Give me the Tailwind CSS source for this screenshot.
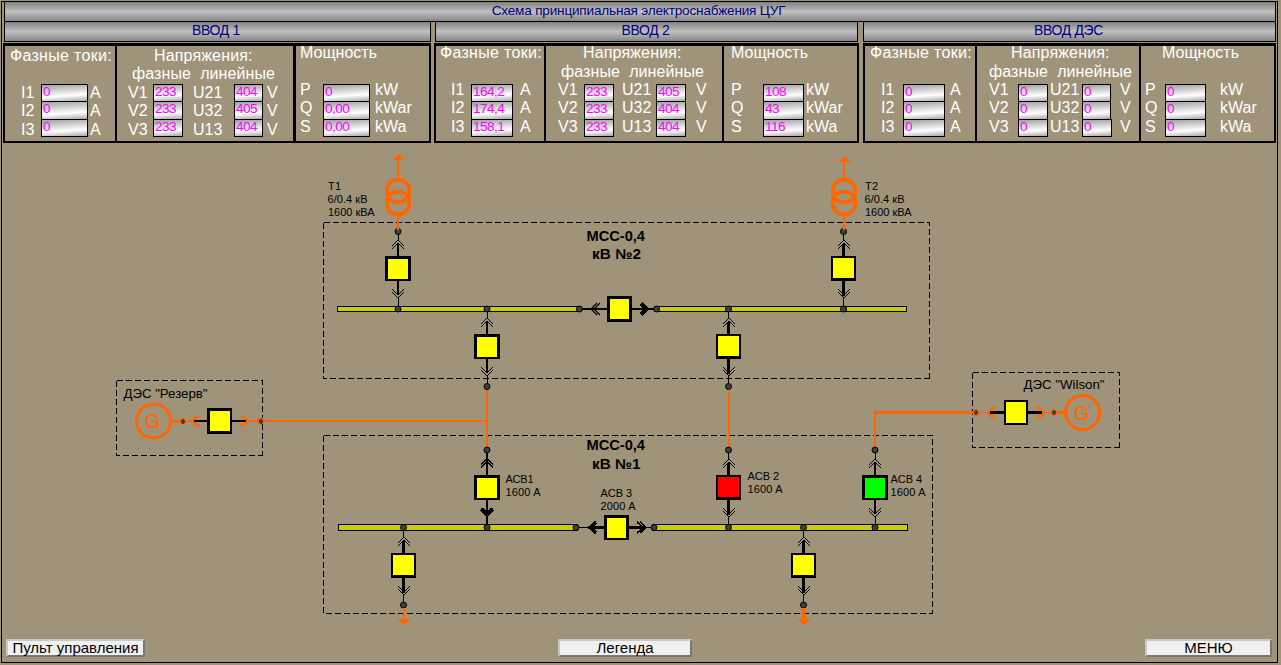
<!DOCTYPE html>
<html lang="ru">
<head>
<meta charset="utf-8">
<title>Схема принципиальная электроснабжения ЦУГ</title>
<script src="https://cdn.jsdelivr.net/npm/@tailwindcss/browser@4"></script>
</head>
<body class="h-[665px] w-[1281px] overflow-hidden bg-[#9f9479] font-['Liberation_Sans',Arial,sans-serif]">
<div class="ml-px mt-px flex h-[662px] w-[1277px] flex-col border border-black pl-[2px]">
  <!-- Title -->
  <header class="-mt-px h-[21px] w-[1272px] border border-black bg-linear-to-b from-[#808080] via-[#c0c0c0] to-[#888888] pr-[3px] text-center text-[13.6px] leading-[17px] tracking-[-0.2px] whitespace-nowrap text-[#000080]">Схема принципиальная электроснабжения ЦУГ</header>
  <!-- Feeder headings -->
  <div class="-mt-px flex text-center text-[14px] leading-[17px] tracking-[-0.35px] text-[#000080]">
    <div class="h-[21px] w-[427px] border border-black bg-linear-to-b from-[#808080] via-[#c0c0c0] to-[#888888] pr-[3px]">ВВОД 1</div>
    <div class="ml-[4px] h-[21px] w-[423px] border border-black bg-linear-to-b from-[#808080] via-[#c0c0c0] to-[#888888] pr-[2px]">ВВОД 2</div>
    <div class="ml-[5px] h-[21px] w-[413px] border border-black bg-linear-to-b from-[#808080] via-[#c0c0c0] to-[#888888] pr-[2px]">ВВОД ДЭС</div>
  </div>
  <!-- Measurements -->
  <main class="-ml-px mt-px flex text-[16px] leading-[18.4px] whitespace-nowrap text-white [&_.v]:flex [&_.v]:flex-col [&_.v]:text-[13.6px] [&_.v]:leading-[14px] [&_.v]:tracking-[-0.55px] [&_.v]:text-[#ff00ff] [&_.v>div]:h-[18px] [&_.v>div]:border [&_.v>div]:border-black [&_.v>div]:bg-linear-[176deg] [&_.v>div]:from-[#a0a0a0] [&_.v>div]:via-[#ffffff] [&_.v>div]:via-65% [&_.v>div]:to-[#a8a8a8] [&_.v>div]:pl-px [&_.v>div+div]:-mt-px [&_.v>div:nth-child(2)]:h-[19px]">
    <section class="flex h-[100px] w-[428px] border-2 border-t-3 border-black">
      <div class="w-[112px] border-r-2 border-black">
        <div class="h-[38px] pt-px pl-[5px] tracking-[0.3px]">Фазные токи:</div>
        <div class="grid grid-cols-[20px_47px_1fr] pl-[16px]">
          <div>I1<br>I2<br>I3</div>
          <div class="v"><div>0</div><div>0</div><div>0</div></div>
          <div class="pl-[2px]">A<br>A<br>A</div>
        </div>
      </div>
      <div class="w-[179px] border-r-3 border-black">
        <div class="h-[38px] pt-px"><div class="pl-[37px] tracking-[0.15px]">Напряжения:</div><div class="pl-[15px] tracking-[0.1px]">фазные&nbsp; линейные</div></div>
        <div class="grid grid-cols-[25px_30px_51px_29px_1fr] pl-[11px]">
          <div>V1<br>V2<br>V3</div>
          <div class="v"><div>233</div><div>233</div><div>233</div></div>
          <div class="pl-[10px]">U21<br>U32<br>U13</div>
          <div class="v"><div>404</div><div>405</div><div>404</div></div>
          <div class="pl-[4px]">V<br>V<br>V</div>
        </div>
      </div>
      <div class="flex-1">
        <div class="-mt-[2px] h-[40px] pl-[4px]">Мощность</div>
        <div class="grid grid-cols-[24px_47px_1fr] pl-[3px]">
          <div class="-mt-[3px] pl-px">P<br>Q<br>S</div>
          <div class="v"><div>0</div><div>0,00</div><div>0,00</div></div>
          <div class="-mt-[3px] pl-[5px]">kW<br>kWar<br>kWa</div>
        </div>
      </div>
    </section>
    <section class="ml-[3px] flex h-[100px] w-[425px] border-2 border-t-3 border-black [&_.v>div]:pl-[2px]">
      <div class="w-[110px] border-r-2 border-black">
        <div class="-mt-[2px] h-[40px] pl-[4px] tracking-[0.3px]">Фазные токи:</div>
        <div class="grid grid-cols-[20px_42px_1fr] pl-[15px]">
          <div class="-mt-[3px]">I1<br>I2<br>I3</div>
          <div class="v"><div>164,2</div><div>174,4</div><div>158,1</div></div>
          <div class="-mt-[3px] pl-[7px]">A<br>A<br>A</div>
        </div>
      </div>
      <div class="w-[178px] border-r-2 border-black">
        <div class="-mt-[2px] h-[40px]"><div class="pl-[37px] tracking-[0.15px]">Напряжения:</div><div class="pt-px pl-[15px] tracking-[0.1px]">фазные&nbsp; линейные</div></div>
        <div class="grid grid-cols-[26px_30px_42px_30px_1fr] pl-[12px]">
          <div class="-mt-[3px]">V1<br>V2<br>V3</div>
          <div class="v"><div>233</div><div>233</div><div>233</div></div>
          <div class="-mt-[3px] pl-[8px]">U21<br>U32<br>U13</div>
          <div class="v"><div>405</div><div>404</div><div>404</div></div>
          <div class="-mt-[3px] pl-[10px]">V<br>V<br>V</div>
        </div>
      </div>
      <div class="flex-1">
        <div class="-mt-[2px] h-[40px] pl-[7px]">Мощность</div>
        <div class="grid grid-cols-[33px_41px_1fr] pl-[6px]">
          <div class="-mt-[3px] pl-px">P<br>Q<br>S</div>
          <div class="v"><div>108</div><div>43</div><div>116</div></div>
          <div class="-mt-[3px] pl-[2px]">kW<br>kWar<br>kWa</div>
        </div>
      </div>
    </section>
    <section class="ml-[4px] flex h-[100px] w-[413px] border-2 border-t-3 border-black [&_.v>div]:pl-[2px]">
      <div class="w-[112px] border-r-2 border-black">
        <div class="-mt-[2px] h-[40px] pl-[5px] tracking-[0.3px]">Фазные токи:</div>
        <div class="grid grid-cols-[22px_42px_1fr] pl-[16px]">
          <div class="-mt-[3px]">I1<br>I2<br>I3</div>
          <div class="v"><div>0</div><div>0</div><div>0</div></div>
          <div class="-mt-[3px] pl-[5px]">A<br>A<br>A</div>
        </div>
      </div>
      <div class="w-[164px] border-r-2 border-black">
        <div class="-mt-[2px] h-[40px]"><div class="pl-[34px] tracking-[0.15px]">Напряжения:</div><div class="pt-px pl-[12px] tracking-[0.1px]">фазные&nbsp; линейные</div></div>
        <div class="grid grid-cols-[29px_30px_34px_29px_1fr] pl-[12px]">
          <div class="-mt-[3px]">V1<br>V2<br>V3</div>
          <div class="v"><div>0</div><div>0</div><div>0</div></div>
          <div class="-mt-[3px] pl-[2px]">U21<br>U32<br>U13</div>
          <div class="v"><div>0</div><div>0</div><div class="-mr-px">0</div></div>
          <div class="-mt-[3px] pl-[9px]">V<br>V<br>V</div>
        </div>
      </div>
      <div class="flex-1">
        <div class="-mt-[2px] h-[40px] pl-[21px]">Мощность</div>
        <div class="grid grid-cols-[21px_41px_1fr] pl-[3px]">
          <div class="-mt-[3px] pl-px">P<br>Q<br>S</div>
          <div class="v"><div>0</div><div>0</div><div>0</div></div>
          <div class="-mt-[3px] pl-[14px]">kW<br>kWar<br>kWa</div>
        </div>
      </div>
    </section>
  </main>
  <!-- Single-line diagram -->
  <svg class="-ml-[4px] h-[496px] w-[1281px] shrink-0" viewBox="0 143 1281 496" shape-rendering="crispEdges" fill="none">
    <defs>
      <g id="chev"><path d="M-6 -22.5L0 -28.5L6 -22.5M-6 -19.5L0 -25.5L6 -19.5M-6 20.5L0 26.5L6 20.5M-6 23.5L0 29.5L6 23.5" stroke="#000"/></g>
      <g id="b3"><use href="#chev"/><path d="M.5 -37V-28M.5 29V38" stroke="#000"/><path d="M0 -25V25" stroke="#000" stroke-width="2"/><path d="M-13 -12.5h26v25h-26z" fill="#000"/><path d="M-10 -9.5h20v20h-20z" fill="currentColor"/></g>
      <g id="b2"><use href="#chev" x="0.5"/><path d="M0 -37V-28M0 29V38" stroke="#000"/><path d="M0 -25V27" stroke="#000" stroke-width="3"/><path d="M-12.5 -12.5h25v25h-25z" fill="#000"/><path d="M-10.5 -10.5h21v20h-21z" fill="currentColor"/></g>
      <circle id="n" r="3" fill="#404040" stroke="#000" shape-rendering="geometricPrecision"/>
      <g id="on"><circle r="3.5" fill="#ff6600" shape-rendering="geometricPrecision"/><path d="M-2 -1.5h1v-1h2v1h1v3h-1v1h-2v-1h-1z" fill="#404040"/></g>
      <g id="tr" stroke="#ff6600"><circle cy="191" r="11.5" stroke-width="4"/><circle cy="203" r="11.5" stroke-width="4"/><path d="M0 216V230" stroke-width="2"/></g>
    </defs>

    <g stroke="#000" stroke-dasharray="6 3">
      <path d="M323.5 222.5H929.5V378.5M323.5 222.5V378.5H929.5"/>
      <path d="M323.5 435.5H932.5V613.5M323.5 435.5V613.5H932.5"/>
      <path d="M116.5 380.5H262.5V455.5M116.5 380.5V455.5H262.5"/>
      <path d="M972.5 372.5H1119.5V447.5M972.5 372.5V447.5H1119.5"/>
    </g>

    <g fill="#cccc00" stroke="#000">
      <path d="M337.5 306.5H580.5V311.5H337.5zM655.5 306.5H906.5V311.5H655.5z"/>
      <path d="M338.5 524.5H577.5V530.5H338.5zM652.5 524.5H907.5V530.5H652.5z"/>
    </g>

    <g stroke="#ff6600" stroke-width="2">
      <path d="M487 389V448M263 421H487M729 391V448M875 448V412"/>
      <path d="M874 412.5H974" stroke-width="3"/>
    </g>

    <g color="#ffff00">
      <use href="#b3" x="398" y="268.5"/>
      <use href="#b2" x="843.5" y="268.5"/>
      <use href="#b3" x="487" y="346.5"/>
      <use href="#b2" x="728.5" y="346.5"/>
      <use href="#b3" x="487" y="487.5"/>
      <use href="#b2" x="728.5" y="487.5" color="#ff0000"/>
      <use href="#b3" x="875" y="487.5" color="#00ff00"/>
      <use href="#b2" x="403.5" y="565.5"/>
      <use href="#b2" x="803.5" y="565.5"/>
    </g>
    <path d="M487 453V475M487 500V525" stroke="#000" stroke-width="2"/>
    <path d="M481.5 509L487 514.5L492.5 509" stroke="#000" stroke-width="4"/>
    <path d="M481 464.5L487 458.5L493 464.5M481 467.5L487 461.5L493 467.5" stroke="#000" stroke-width="1.6"/>

    <!-- Bus couplers -->
    <path d="M580 309H656" stroke="#000" stroke-width="2"/>
    <path d="M597 303L591 309L597 315M600 303L594 309L600 315" stroke="#000" stroke-width="1.3" shape-rendering="geometricPrecision"/>
    <path d="M641 303.5L647 309L641 314.5" stroke="#000" stroke-width="4"/>
    <path d="M607 296h25v26h-25z" fill="#000"/><path d="M610 299h19v20h-19z" fill="#ff0"/>
    <path d="M578 527.5H655" stroke="#000"/>
    <path d="M592 527.5H642" stroke="#000" stroke-width="3"/>
    <path d="M596 522L590 527.5L596 533" stroke="#000" stroke-width="3.5"/>
    <path d="M637 522L643 527.5L637 533M640 521.5L645.5 527.5L640 533" stroke="#000" stroke-width="1.6"/>
    <path d="M604 515h25v25h-25z" fill="#000"/><path d="M607 518h19v20h-19z" fill="#ff0"/>

    <use href="#n" x="398" y="231.5"/><use href="#n" x="843.5" y="231.5"/>
    <use href="#n" x="487" y="386.5"/><use href="#n" x="728.5" y="386.5"/>
    <use href="#n" x="487" y="450"/><use href="#n" x="728.5" y="450"/><use href="#n" x="875" y="450"/>
    <use href="#n" x="398" y="309"/><use href="#n" x="487" y="309"/><use href="#n" x="579.5" y="309"/><use href="#n" x="656.5" y="309"/><use href="#n" x="728.5" y="309"/><use href="#n" x="843.5" y="309"/>
    <use href="#n" x="403.5" y="527.5"/><use href="#n" x="487" y="527.5"/><use href="#n" x="576" y="527.5"/><use href="#n" x="654" y="527.5"/><use href="#n" x="728.5" y="527.5"/><use href="#n" x="803.5" y="527.5"/><use href="#n" x="875" y="527.5"/>
    <use href="#n" x="403.5" y="605"/><use href="#n" x="803.5" y="605"/>

    <use href="#tr" x="398"/><use href="#tr" x="844"/>
    <g fill="#ff6600">
      <path d="M392 160L398 154L404 160zM397 159h2v20h-2z"/>
      <path d="M838 162L844 156L850 162zM843 161h2v18h-2z"/>
      <path d="M397.500 619h12.500L403.700 625.500zM403 608h2v12h-2z"/>
      <path d="M797 619h13L803.500 625.500zM802 608h3v12h-3z"/>
    </g>

    <!-- Reserve generator -->
    <g stroke="#ff6600">
      <circle cx="153.500" cy="421" r="17" stroke-width="3"/>
      <path d="M171 421.500H180" stroke-width="3"/>
      <path d="M184 421H194M246 421H263" stroke-width="2"/>
      <path d="M197 415.500L191.500 421L197 426.500M200 415.500L194.500 421L200 426.500M240 415.500L245.500 421L240 426.500M243 415.500L248.500 421L243 426.500" stroke-width="1.600" shape-rendering="geometricPrecision"/>
    </g>
    <path d="M194 421H246" stroke="#000" stroke-width="2"/>
    <path d="M207 408h25v26h-25z" fill="#000"/><path d="M210 411h20v20h-20z" fill="#ff0"/>
    <use href="#on" x="182.500" y="421"/><use href="#on" x="260.500" y="421"/>

    <!-- Wilson generator -->
    <g stroke="#ff6600">
      <circle cx="1082.500" cy="412.500" r="17" stroke-width="3"/>
      <path d="M1056 412.500H1065" stroke-width="3"/>
      <path d="M979 412.500H990M1042 412.500H1051"/>
      <path d="M993 406.500L987.500 412.500L993 418.500M996 406.500L990.500 412.500L996 418.500M1036 406.500L1041.500 412.500L1036 418.500M1039 406.500L1044.500 412.500L1039 418.500" stroke-width="1.600" shape-rendering="geometricPrecision"/>
    </g>
    <path d="M990 412.500H1042" stroke="#000" stroke-width="3"/>
    <path d="M1004 400h24v25h-24z" fill="#000"/><path d="M1006 402h20v21h-20z" fill="#ff0"/>
    <use href="#on" x="976" y="412.500"/><use href="#on" x="1053.500" y="412.500"/>

    <g fill="#ff6600" stroke="#ff6600" stroke-width="0.300" font-size="19.500"><text x="145" y="428" textLength="16">G</text><text x="1074" y="419.500" textLength="16">G</text></g>
    <g fill="#000" font-size="13.300">
      <text x="123.500" y="398" textLength="84">ДЭС "Резерв"</text>
      <text x="1023.500" y="389" textLength="81">ДЭС "Wilson"</text>
    </g>
    <g fill="#000" font-size="14" font-weight="bold">
      <text x="586.500" y="241" textLength="58.500" lengthAdjust="spacingAndGlyphs">МСС-0,4</text><text x="592" y="259" textLength="49" lengthAdjust="spacingAndGlyphs">кВ №2</text>
      <text x="586.500" y="450" textLength="58.500" lengthAdjust="spacingAndGlyphs">МСС-0,4</text><text x="592" y="469" textLength="48.500" lengthAdjust="spacingAndGlyphs">кВ №1</text>
    </g>
    <g fill="#000" font-size="11">
      <text x="328" y="190" textLength="13">T1</text><text x="327.500" y="203" textLength="40">6/0.4 кВ</text><text x="328" y="216" textLength="46.500">1600 кВА</text>
      <text x="865" y="190" textLength="13">T2</text><text x="864.500" y="203" textLength="40">6/0.4 кВ</text><text x="865" y="216" textLength="46.500">1600 кВА</text>
      <text x="505.500" y="483" textLength="28">ACB1</text><text x="505.500" y="496" textLength="35">1600 A</text>
      <text x="600.500" y="497" textLength="31.500">ACB 3</text><text x="600.500" y="510" textLength="35">2000 A</text>
      <text x="747.500" y="480" textLength="31.500">ACB 2</text><text x="747.500" y="493" textLength="35">1600 A</text>
      <text x="890.500" y="483" textLength="31.500">ACB 4</text><text x="890.500" y="496" textLength="35">1600 A</text>
    </g>
  </svg>
  <!-- Navigation -->
  <footer class="flex text-center text-[15px] leading-[13px] whitespace-nowrap text-black pl-[2px]">
    <button class="h-[18px] w-[139px] border-2 border-t-[#c8c8c8] border-l-[#c8c8c8] border-r-[#77787c] border-b-[#77787c] bg-[#f0f0f0] pb-[3px]">Пульт управления</button>
    <button class="ml-[413px] h-[18px] w-[134px] border-2 border-t-[#c8c8c8] border-l-[#c8c8c8] border-r-[#77787c] border-b-[#77787c] bg-[#f0f0f0] pb-[3px]">Легенда</button>
    <button class="ml-[453px] h-[18px] w-[127px] border-2 border-t-[#c8c8c8] border-l-[#c8c8c8] border-r-[#77787c] border-b-[#77787c] bg-[#f0f0f0] pb-[3px]">МЕНЮ</button>
  </footer>
</div>
</body>
</html>
